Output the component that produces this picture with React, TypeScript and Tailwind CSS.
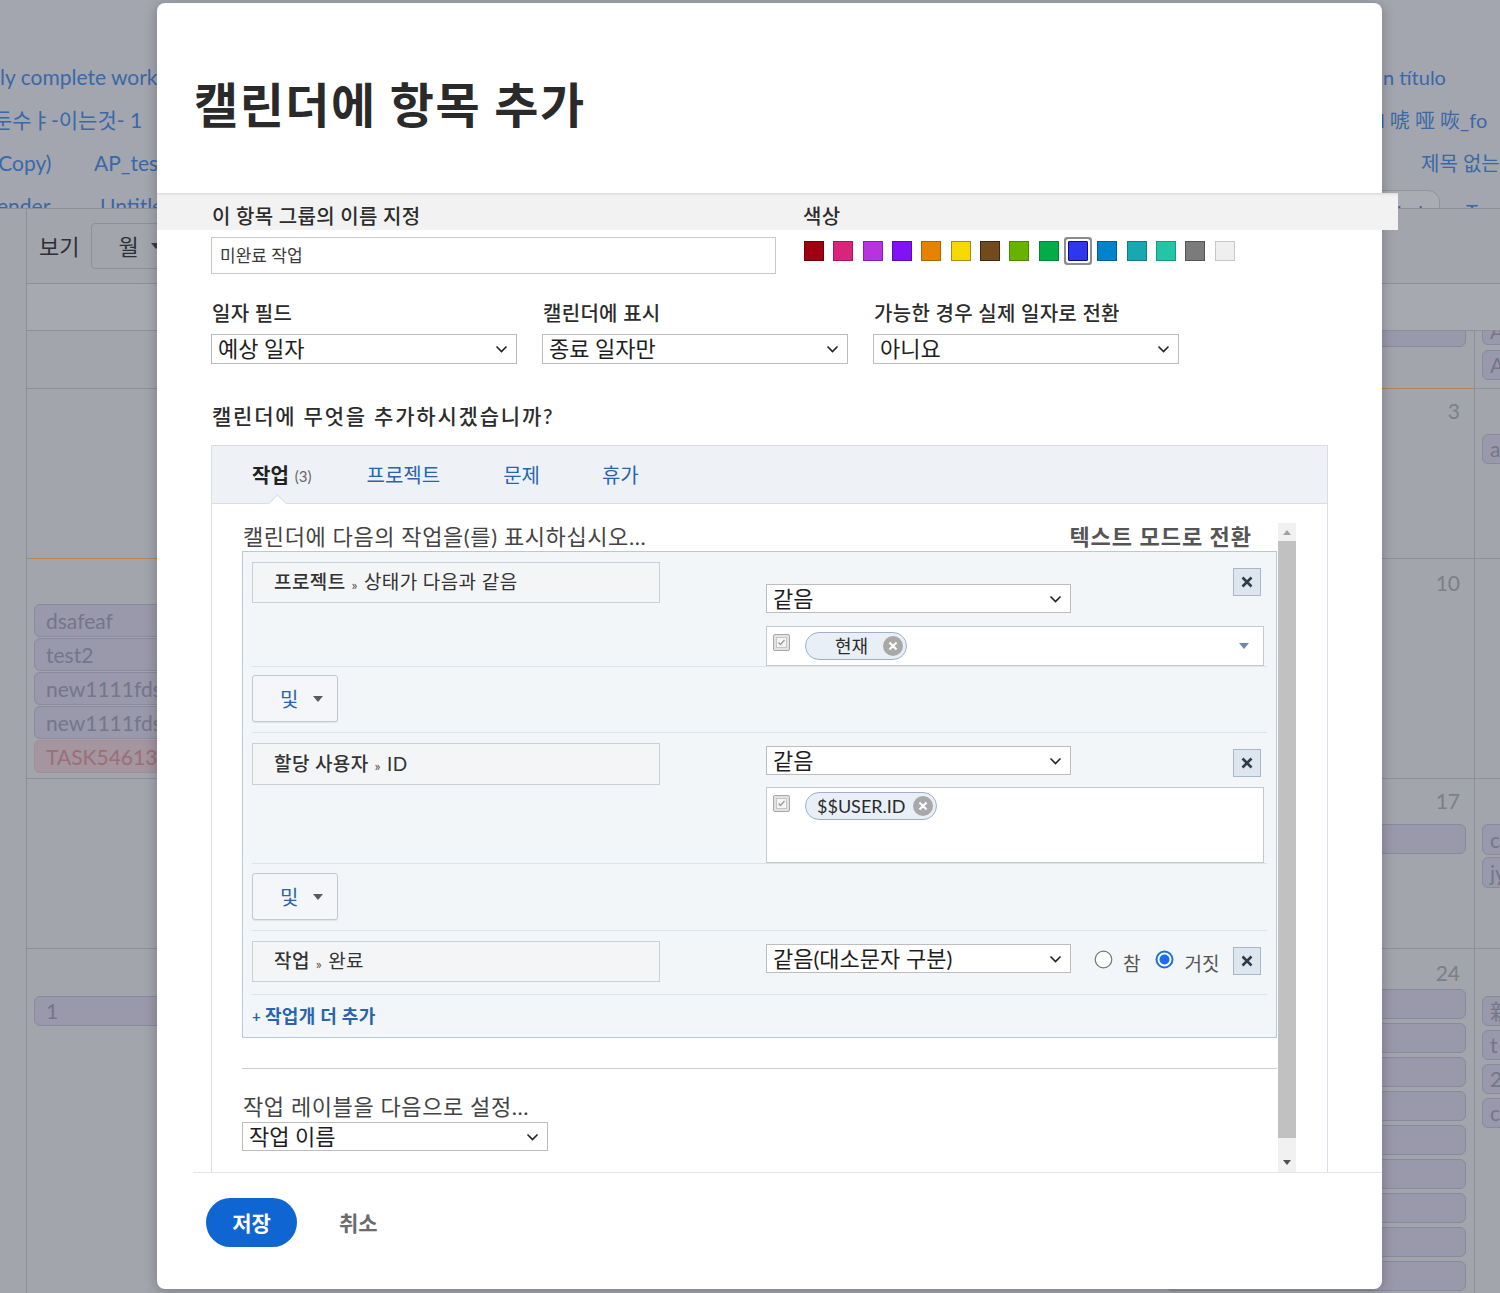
import React from "react";

const SWATCHES: [string, string][] = [
  ["#a10010", "#6e000b"],
  ["#d8247a", "#a8185e"],
  ["#b932e0", "#8b20ab"],
  ["#8112f4", "#5c0cb5"],
  ["#e58200", "#b06300"],
  ["#f5d900", "#a8892a"],
  ["#724a1c", "#3f2810"],
  ["#66b300", "#4b8800"],
  ["#00ad48", "#00853a"],
  ["#2e36ee", "#0b0f8a"],
  ["#0082cc", "#00609a"],
  ["#17a8b4", "#0e7d86"],
  ["#23c5a5", "#179a80"],
  ["#7b7b7b", "#555555"],
  ["#efefef", "#c8c8c8"],
];

function Chevron() {
  return (
    <svg width="13" height="8" viewBox="0 0 13 8">
      <path d="M1.5 1.5l5 5 5-5" fill="none" stroke="#222" strokeWidth="1.6" />
    </svg>
  );
}

function Caret({ color = "#555" }: { color?: string }) {
  return (
    <svg width="10" height="6" viewBox="0 0 10 6">
      <path d="M0 0h10L5 6z" fill={color} />
    </svg>
  );
}

function Select({ value, className }: { value: string; className: string }) {
  return (
    <div className={`flex items-center justify-between border border-[#bdbdbd] bg-white pl-[6px] pr-[8px] ${className}`}>
      <span className="text-[22px] leading-none text-[#1e1e1e]">{value}</span>
      <Chevron />
    </div>
  );
}

function XBtn() {
  return (
    <div className="flex h-[28px] w-[28px] items-center justify-center border border-[#a9b7c6] bg-[#dde5ee]">
      <svg width="12" height="12" viewBox="0 0 12 12">
        <path d="M1.5 1.5l9 9M10.5 1.5l-9 9" stroke="#2e3b4b" strokeWidth="2.6" />
      </svg>
    </div>
  );
}

function CheckIcon() {
  return (
    <svg width="17" height="17" viewBox="0 0 17 17">
      <rect x="0.5" y="0.5" width="16" height="16" rx="1.5" fill="#e2e2e2" stroke="#a8a8a8" />
      <rect x="3.5" y="3.5" width="10" height="10" fill="#f5f5f5" stroke="#c6c6c6" />
      <path d="M5.5 8.5l2 2 4-4.5" fill="none" stroke="#9a9a9a" strokeWidth="1.3" />
    </svg>
  );
}

function XCircle() {
  return (
    <svg width="22" height="22" viewBox="0 0 22 22">
      <circle cx="11" cy="11" r="10" fill="#a8a8a8" />
      <path d="M7.5 7.5l7 7M14.5 7.5l-7 7" stroke="#fff" strokeWidth="2.2" />
    </svg>
  );
}

function Chip({ label, pl, gap }: { label: string; pl: string; gap: string }) {
  return (
    <div className={`flex h-[28px] items-center rounded-full border border-[#9fb0c6] bg-[#e9eff7] pr-[2px] ${pl}`}>
      <span className="text-[18px] leading-none text-[#2b2b2b]">{label}</span>
      <span className={gap}>
        <XCircle />
      </span>
    </div>
  );
}

function AndBtn() {
  return (
    <div className="flex h-[47px] w-[86px] items-center rounded-[3px] border border-[#c3cad3] bg-[#f4f6f9] pl-[27px] shadow-[0_1px_1px_rgba(0,0,0,0.08)]">
      <span className="text-[20px] leading-none text-[#2a64ad]">및</span>
      <span className="ml-[15px]">
        <Caret color="#5a5a5a" />
      </span>
    </div>
  );
}

function Radio({ checked }: { checked?: boolean }) {
  return checked ? (
    <svg width="19" height="19" viewBox="0 0 19 19">
      <circle cx="9.5" cy="9.5" r="8" fill="#fff" stroke="#1a6fe6" strokeWidth="2" />
      <circle cx="9.5" cy="9.5" r="5" fill="#1a6fe6" />
    </svg>
  ) : (
    <svg width="19" height="19" viewBox="0 0 19 19">
      <circle cx="9.5" cy="9.5" r="8.3" fill="#fff" stroke="#767676" strokeWidth="1.2" />
    </svg>
  );
}

function Field({ strong, rest }: { strong: string; rest: string }) {
  return (
    <div className="flex h-full w-[408px] items-center border border-[#ccd0d6] bg-[#f4f5f7] pl-[21px] text-[19px] tracking-[0.4px] text-[#333]">
      <span className="font-medium">{strong}</span>
      <span className="mx-[6px] mt-[3px] text-[14px] text-[#555]">»</span>
      <span>{rest}</span>
    </div>
  );
}

function BgPill({ text, red }: { text: string; red?: boolean }) {
  return (
    <div
      className={`flex h-[33px] w-[400px] items-center rounded-[6px] border pl-[11px] text-[21px] ${
        red ? "border-[#a08e98] bg-[#a4959f] text-[#9b6e78]" : "border-[#8b899f] bg-[#9a98ab] text-[#74768a]"
      }`}
    >
      {text}
    </div>
  );
}

function Bar({ cls }: { cls: string }) {
  return <div className={`w-[300px] rounded-[6px] border border-[#8b899f] bg-[#9a98ab] ${cls}`} />;
}

function SidePill({ text, cls }: { text: string; cls: string }) {
  return (
    <div className={`flex w-[60px] items-center rounded-[6px] border border-[#8b899f] bg-[#9a98ab] pl-[7px] text-[21px] text-[#74768a] ${cls}`}>
      {text}
    </div>
  );
}

function Background() {
  return (
    <div className="flex h-full flex-col">
      <div className="flex h-[208px] shrink-0 justify-between overflow-hidden text-[21px] text-[#3a68a8]">
        <div className="w-[157px] shrink-0 overflow-hidden pt-[56px]">
          <div className="flex h-[42px] items-center whitespace-nowrap">ly complete work</div>
          <div className="-ml-[7px] flex h-[43px] items-center whitespace-nowrap">둔수ㅑ-이는것- 1</div>
          <div className="-ml-[7px] flex h-[43px] items-center whitespace-nowrap">
            <span className="w-[101px] shrink-0">(Copy)</span>
            <span>AP_test</span>
          </div>
          <div className="-ml-[3px] flex h-[43px] items-center whitespace-nowrap">
            <span className="w-[103px] shrink-0">ender</span>
            <span>Untitled</span>
          </div>
        </div>
        <div className="w-[118px] shrink-0 overflow-hidden pt-[56px] text-[20px]">
          <div className="flex h-[42px] items-center whitespace-nowrap pl-[1px]">n título</div>
          <div className="-ml-[2px] flex h-[43px] items-center whitespace-nowrap">l 唬 哑 咴_fo</div>
          <div className="flex h-[43px] items-center whitespace-nowrap pl-[39px]">제목 없는</div>
          <div className="-ml-[12px] flex h-[43px] items-start whitespace-nowrap pt-[6px]">
            <div className="h-[40px] w-[70px] shrink-0 rounded-t-[12px] border border-[#8f949c] bg-[#a9acb3] pl-[9px] pt-[6px]">Work</div>
            <span className="ml-[26px] pt-[6px]">Team</span>
          </div>
        </div>
      </div>
      <div className="flex flex-1 border-t border-[#8d9098] bg-[#a2a5ac]">
        <div className="w-[27px] shrink-0 border-r border-[#8d9098]" />
        <div className="flex flex-1 flex-col">
          <div className="flex h-[75px] shrink-0 items-center border-b border-[#8d9098] pl-[12px]">
            <span className="text-[22px] text-[#2e3036]">보기</span>
            <div className="ml-[12px] flex h-[46px] w-[90px] items-center rounded-[4px] border border-[#8d9098] pl-[26px] text-[22px] text-[#2e3036]">
              월
              <span className="ml-[12px]">
                <Caret color="#3a3c42" />
              </span>
            </div>
          </div>
          <div className="h-[47px] shrink-0 border-b border-[#8d9098] bg-[#a6a9b0]" />

          {/* row 0 */}
          <div className="flex h-[57px] shrink-0 overflow-hidden">
            <div className="w-[700px] shrink-0" />
            <div className="flex flex-1 flex-col items-end pr-[8px]">
              <Bar cls="-mt-[14px] h-[30px]" />
            </div>
            <div className="w-[26px] shrink-0 border-l border-[#8d9098] pl-[7px]">
              <SidePill text="A" cls="-mt-[14px] h-[28px]" />
              <SidePill text="A" cls="mt-[5px] h-[30px]" />
            </div>
          </div>

          {/* row 1 */}
          <div className="flex h-[170px] shrink-0">
            <div className="w-[700px] shrink-0 border-t border-[#8d9098]" />
            <div className="flex flex-1 flex-col items-end border-t border-[#b4845a] pr-[14px] pt-[10px]">
              <span className="text-[21px] leading-[24px] text-[#7c7f87]">3</span>
            </div>
            <div className="w-[26px] shrink-0 border-l border-t border-[#8d9098] pl-[7px] pt-[45px]">
              <SidePill text="a" cls="h-[30px]" />
            </div>
          </div>

          {/* row 2 */}
          <div className="flex h-[220px] shrink-0">
            <div className="flex w-[700px] shrink-0 flex-col gap-[1px] border-t border-[#b4845a] pl-[7px] pt-[45px]">
              <BgPill text="dsafeaf" />
              <BgPill text="test2" />
              <BgPill text="new1111fdsa" />
              <BgPill text="new1111fdsa" />
              <BgPill text="TASK546132" red />
            </div>
            <div className="flex flex-1 flex-col items-end border-t border-[#8d9098] pr-[14px] pt-[12px]">
              <span className="text-[21px] leading-[24px] text-[#7c7f87]">10</span>
            </div>
            <div className="w-[26px] shrink-0 border-l border-t border-[#8d9098]" />
          </div>

          {/* row 3 */}
          <div className="flex h-[170px] shrink-0">
            <div className="w-[700px] shrink-0 border-t border-[#8d9098]" />
            <div className="flex flex-1 flex-col items-end border-t border-[#8d9098] pr-[8px] pt-[10px]">
              <span className="pr-[6px] text-[21px] leading-[24px] text-[#7c7f87]">17</span>
              <Bar cls="mt-[11px] h-[30px]" />
            </div>
            <div className="w-[26px] shrink-0 border-l border-t border-[#8d9098] pl-[7px] pt-[45px]">
              <SidePill text="c" cls="h-[31px]" />
              <SidePill text="jy" cls="mt-[2px] h-[31px]" />
            </div>
          </div>

          {/* row 4 */}
          <div className="flex flex-1">
            <div className="w-[700px] shrink-0 border-t border-[#8d9098] pl-[7px] pt-[47px]">
              <div className="flex h-[30px] w-[400px] items-center rounded-[6px] border border-[#8b899f] bg-[#9a98ab] pl-[11px] text-[21px] text-[#74768a]">1</div>
            </div>
            <div className="flex flex-1 flex-col items-end gap-[4px] border-t border-[#8d9098] pr-[8px] pt-[12px]">
              <span className="pr-[6px] text-[21px] leading-[24px] text-[#7c7f87]">24</span>
              <Bar cls="h-[30px]" />
              <Bar cls="h-[30px]" />
              <Bar cls="h-[30px]" />
              <Bar cls="h-[30px]" />
              <Bar cls="h-[30px]" />
              <Bar cls="h-[30px]" />
              <Bar cls="h-[30px]" />
              <Bar cls="h-[30px]" />
              <Bar cls="h-[30px]" />
            </div>
            <div className="flex w-[26px] shrink-0 flex-col gap-[4px] border-l border-t border-[#8d9098] pl-[7px] pt-[47px]">
              <SidePill text="新" cls="h-[30px]" />
              <SidePill text="t" cls="h-[30px]" />
              <SidePill text="2" cls="h-[30px]" />
              <SidePill text="c" cls="h-[30px]" />
            </div>
          </div>
        </div>
      </div>
    </div>
  );
}

function Modal() {
  return (
    <div className="absolute left-[157px] top-[3px] flex h-[1286px] w-[1225px] flex-col rounded-[8px] bg-white shadow-[0_2px_14px_rgba(0,0,0,0.25)]">
      {/* title */}
      <div className="h-[190px] shrink-0 pl-[37px] pt-[72px]">
        <h1 className="text-[48px] font-bold leading-[60px] tracking-[1.5px] text-[#2a2a2a]">캘린더에 항목 추가</h1>
      </div>

      {/* group name band */}
      <div className="-mr-[16px] flex h-[37px] shrink-0 items-end bg-[#f2f2f2] pb-[2px] pl-[55px] text-[20px] font-medium leading-[24px] tracking-[0.3px] text-[#2c2c2c] shadow-[inset_0_3px_3px_-2px_rgba(0,0,0,0.12)]">
        <span className="w-[591px]">이 항목 그룹의 이름 지정</span>
        <span>색상</span>
      </div>

      <div className="flex flex-1 flex-col px-[54px]">
        <div className="mt-[7px] flex items-start">
          <div className="flex h-[37px] w-[565px] items-center border border-[#c9c9c9] bg-white pl-[8px] text-[17px] text-[#3a3a3a]">
            미완료 작업
          </div>
          <div className="ml-[28px] mt-[4px] flex gap-[9.33px]">
            {SWATCHES.map(([bg, bd], i) => (
              <div
                key={i}
                className={`h-[20px] w-[20px] border ${i === 9 ? "rounded-[1px] shadow-[0_0_0_2px_#fff,0_0_0_4px_#8c8c8c]" : ""}`}
                style={{ backgroundColor: bg, borderColor: bd }}
              />
            ))}
          </div>
        </div>

        <div className="mt-[27px] flex gap-[25px]">
          {[
            ["일자 필드", "예상 일자"],
            ["캘린더에 표시", "종료 일자만"],
            ["가능한 경우 실제 일자로 전환", "아니요"],
          ].map(([label, value]) => (
            <div key={label} className="flex w-[306px] flex-col">
              <span className="pl-[1px] text-[20px] font-medium leading-[24px] tracking-[0.3px] text-[#2c2c2c]">{label}</span>
              <Select value={value} className="mt-[9px] h-[30px] w-[306px]" />
            </div>
          ))}
        </div>

        <div className="mt-[40px] pl-[1px] text-[21px] font-medium leading-[24px] tracking-[1.8px] text-[#2c2c2c]">
          캘린더에 무엇을 추가하시겠습니까?
        </div>

        {/* tab panel */}
        <div className="mt-[17px] flex h-[727px] w-[1117px] flex-col border-x border-t border-[#d6dee7]">
          <div className="relative flex h-[58px] shrink-0 items-center border-b border-[#d6dee7] bg-[#eef2f7] pl-[40px] text-[20px] leading-none">
            <span className="font-bold text-[#222]">작업</span>
            <span className="ml-[6px] mt-[4px] text-[15px] text-[#666]">(3)</span>
            <span className="ml-[55px] text-[#2a64ad]">프로젝트</span>
            <span className="ml-[63px] text-[#2a64ad]">문제</span>
            <span className="ml-[62px] text-[#2a64ad]">휴가</span>
            <div className="absolute bottom-[-7px] left-[59px] h-[13px] w-[13px] rotate-45 border-l border-t border-[#d6dee7] bg-white" />
          </div>

          <div className="flex flex-1 overflow-hidden pl-[30px] pt-[19px]">
            <div className="flex w-[1035px] shrink-0 flex-col">
              <div className="flex h-[28px] items-center justify-between pr-[25px]">
                <span className="pl-[1px] text-[22px] leading-[28px] tracking-[0.6px] text-[#444]">캘린더에 다음의 작업을(를) 표시하십시오...</span>
                <span className="text-[22px] font-bold leading-[28px] tracking-[1px] text-[#555]">텍스트 모드로 전환</span>
              </div>

              {/* filter box */}
              <div className="flex flex-col border border-[#b9c8d8] bg-[#f3f6f9] px-[9px]">
                {/* row 1 */}
                <div className="flex items-start border-b border-[#dde3ea]">
                  <div className="mt-[10px] h-[41px]">
                    <Field strong="프로젝트" rest="상태가 다음과 같음" />
                  </div>
                  <div className="ml-[106px] flex flex-1 flex-col">
                    <div className="flex items-start justify-between">
                      <Select value="같음" className="mt-[32px] h-[29px] w-[305px]" />
                      <div className="mr-[6px] mt-[16px]">
                        <XBtn />
                      </div>
                    </div>
                    <div className="mt-[13px] flex h-[40px] w-[498px] items-start border border-[#c9c9c9] bg-white">
                      <div className="ml-[6px] mt-[7px]">
                        <CheckIcon />
                      </div>
                      <div className="ml-[15px] mt-[5px]">
                        <Chip label="현재" pl="pl-[29px]" gap="ml-[14px]" />
                      </div>
                      <div className="ml-auto mr-[14px] self-center">
                        <Caret color="#7089a8" />
                      </div>
                    </div>
                  </div>
                </div>

                <div className="border-b border-[#dde3ea] pb-[10px] pt-[8px]">
                  <AndBtn />
                </div>

                {/* row 2 */}
                <div className="flex items-start border-b border-[#dde3ea]">
                  <div className="mt-[10px] h-[42px]">
                    <Field strong="할당 사용자" rest="ID" />
                  </div>
                  <div className="ml-[106px] flex flex-1 flex-col">
                    <div className="flex items-start justify-between">
                      <Select value="같음" className="mt-[13px] h-[29px] w-[305px]" />
                      <div className="mr-[6px] mt-[16px]">
                        <XBtn />
                      </div>
                    </div>
                    <div className="mt-[10px] flex h-[76px] w-[498px] items-start border border-[#c9c9c9] bg-white">
                      <div className="ml-[6px] mt-[7px]">
                        <CheckIcon />
                      </div>
                      <div className="ml-[15px] mt-[4px]">
                        <Chip label="$$USER.ID" pl="pl-[11px]" gap="ml-[6px]" />
                      </div>
                    </div>
                  </div>
                </div>

                <div className="border-b border-[#dde3ea] pb-[10px] pt-[9px]">
                  <AndBtn />
                </div>

                {/* row 3 */}
                <div className="flex items-start border-b border-[#dde3ea] pb-[12px]">
                  <div className="mt-[10px] h-[41px]">
                    <Field strong="작업" rest="완료" />
                  </div>
                  <div className="ml-[106px] flex flex-1 items-start">
                    <Select value="같음(대소문자 구분)" className="mt-[13px] h-[29px] w-[305px]" />
                    <div className="ml-[23px] mt-[15px] flex items-center">
                      <Radio />
                      <span className="ml-[10px] mt-[8px] text-[19px] leading-none text-[#555]">참</span>
                      <span className="ml-[15px]">
                        <Radio checked />
                      </span>
                      <span className="ml-[10px] mt-[8px] text-[19px] leading-none text-[#555]">거짓</span>
                    </div>
                    <div className="ml-auto mr-[6px] mt-[16px]">
                      <XBtn />
                    </div>
                  </div>
                </div>

                <div className="flex h-[42px] items-center text-[18px] font-bold tracking-[0.3px] text-[#2a64ad]">
                  <span className="mr-[4px] text-[15px]">+</span>작업개 더 추가
                </div>
              </div>

              <div className="mt-[30px] border-t border-[#cdcdcd]" />
              <div className="mt-[24px] pl-[1px] text-[22px] leading-[28px] tracking-[0.6px] text-[#444]">작업 레이블을 다음으로 설정...</div>
              <Select value="작업 이름" className="mt-[1px] h-[29px] w-[306px]" />
            </div>

            {/* scrollbar */}
            <div className="ml-[1px] flex w-[18px] shrink-0 flex-col bg-[#f1f1f1]">
              <div className="flex h-[18px] shrink-0 items-center justify-center">
                <svg width="8" height="5" viewBox="0 0 8 5">
                  <path d="M0 5h8L4 0z" fill="#a3a3a3" />
                </svg>
              </div>
              <div className="h-[597px] shrink-0 bg-[#c1c1c1]" />
              <div className="flex flex-1 items-end justify-center pb-[7px]">
                <svg width="8" height="5" viewBox="0 0 8 5">
                  <path d="M0 0h8L4 5z" fill="#505050" />
                </svg>
              </div>
            </div>
          </div>
        </div>
      </div>

      {/* footer */}
      <div className="ml-[36px] flex h-[117px] shrink-0 items-start border-t border-[#e4e4e4] pl-[13px] pt-[25px]">
        <div className="flex h-[49px] w-[91px] items-center justify-center rounded-full bg-[#0f65d2] text-[21px] font-bold text-white">
          저장
        </div>
        <div className="ml-[42px] flex h-[49px] items-center text-[21px] font-bold text-[#6b6b6b]">취소</div>
      </div>
    </div>
  );
}

export default function App() {
  return (
    <div className="relative h-[1293px] w-[1500px] overflow-hidden bg-[#a3a6ae] font-['Lato','Noto_Sans_CJK_KR',sans-serif]">
      <Background />
      <Modal />
    </div>
  );
}
